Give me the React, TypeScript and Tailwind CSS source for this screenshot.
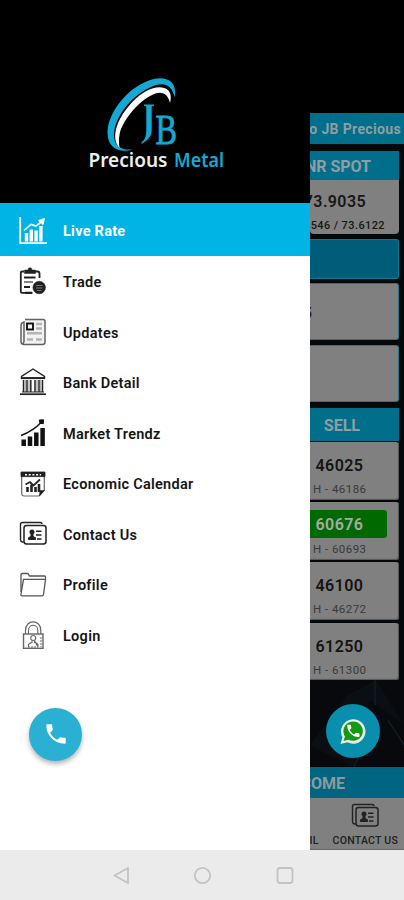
import React from "react";

type IconProps = { children: React.ReactNode; className?: string };

function Icon({ children, className = "" }: IconProps) {
  return (
    <svg viewBox="0 0 28 28" className={`h-7 w-7 shrink-0 ${className}`} fill="none" stroke="currentColor">
      {children}
    </svg>
  );
}

const LiveRateIcon = () => (
  <Icon>
    <path d="M1.2 0V26.2H28" strokeWidth="1.8" />
    <path d="M7.5 24.5V16M12.3 24.5V12.5M17.1 24.5V13.5M21.9 24.5V9" strokeWidth="3.4" />
    <path d="M5 13.5L12 7.500L17 9L23.5 4" strokeWidth="1.6" />
    <path d="M19.5 3.5L25.5 1.5L24 7.5Z" fill="currentColor" strokeWidth="1" />
  </Icon>
);

const TradeIcon = () => (
  <Icon className="text-[#202020]">
    <path d="M5 4.500H3Q1.8 4.500 1.8 6V24.5Q1.8 25.8 3 25.8H13.5" strokeWidth="1.8" />
    <path d="M16 4.500H18.5Q20.5 4.500 20.5 6.500V11" strokeWidth="1.8" />
    <path d="M5.500 3H9Q9 .700 11 .700Q13 .700 13 3H16.500V6.500H5.500Z" fill="currentColor" strokeWidth=".5" />
    <path d="M5 10.5H16.5M5 20H11M6 25.8H13" strokeWidth="2.200" />
    <path d="M5 15H14" strokeWidth="1.8" stroke="#777" />
    <circle cx="20.2" cy="20.5" r="6.3" fill="currentColor" strokeWidth=".5" />
    <path d="M17 18.5H23.5M17 21H23.5M18 23.5H22.5" stroke="#777" strokeWidth="1" />
  </Icon>
);

const NewsIcon = () => (
  <Icon className="text-[#626262]">
    <path d="M6 1.5H24Q26 1.5 26 3.5V24Q26 26.5 23.5 26.5H5Q2 26.5 2 23.5V7Q2 5 5 4V23Q5 25 3.5 26" strokeWidth="1.5" fill="#f2f2f2" />
    <rect x="8" y="5.5" width="6" height="6" stroke="#111" strokeWidth="1.9" />
    <path d="M17 6H23M17 10.5H23M8 15.3H23M8 21.5H14M17 21.5H23" stroke="#b4b4b4" strokeWidth="2.5" />
  </Icon>
);

const BankIcon = () => (
  <Icon className="text-[#222]">
    <path d="M2.5 10V8.5L14 1L25.5 8.5V10Z" strokeWidth="1.4" />
    <path d="M2 10.2H26" strokeWidth="1.8" />
    <path d="M4.5 12V24M8 12V24M11.8 12V24M16 12V24M20 12V24M23.5 12V24" strokeWidth="1.5" />
    <path d="M6.2 12V24M21.8 12V24M10 12V24M18 12V24" stroke="#999" strokeWidth="1.1" />
    <path d="M3 24H25" strokeWidth="1" />
    <path d="M1 26.2H27" strokeWidth="1.7" />
  </Icon>
);

const TrendIcon = () => (
  <Icon className="text-[#111]">
    <path d="M4.7 27V20.5M11 27V17.5M17.3 27V13.5M23.6 27V9" strokeWidth="4.5" />
    <path d="M2 16.5C10 13.5 17 9 22.500 3" strokeWidth="1.4" />
    <path d="M20.3 1L24.5 .8L24.3 4.8L21 4.200Z" fill="currentColor" strokeWidth="1" />
  </Icon>
);

const CalendarIcon = () => (
  <Icon className="text-[#222]">
    <path d="M2.7 3H25.3V20L20 26H5.2Q2.7 26 2.7 23.5Z" strokeWidth="1.2" stroke="#666" />
    <path d="M2 2H26V6.6H2Z" fill="currentColor" strokeWidth=".8" />
    <path d="M6 4.7H22" stroke="white" strokeWidth="1.5" strokeDasharray="2 1.7" />
    <path d="M21 20.5H25.5L20.5 26Z" fill="currentColor" strokeWidth=".5" />
    <path d="M8.5 22V17M12.5 22V14.5M16.5 22V17M20 22V14" strokeWidth="2.6" />
    <path d="M6.5 14.5L11 12L14.5 15.500L21 9.5" strokeWidth="1.8" />
  </Icon>
);

const ContactIcon = ({ className = "text-[#222]" }: { className?: string }) => (
  <Icon className={className}>
    <path d="M4.5 22H3.5Q1.5 21.5 1.5 19.5V4.5Q1.5 2.5 3.5 2.5H21Q23 2.5 23 4" strokeWidth="1.4" />
    <rect x="5" y="5.6" width="22" height="18.500" rx="2.5" strokeWidth="1.5" />
    <circle cx="13" cy="12" r="2.3" fill="currentColor" strokeWidth=".5" />
    <path d="M9.5 19.5V17.7L12 16.5V14H14V16.5L16.5 17.7V19.5Z" fill="currentColor" strokeWidth="1" />
    <path d="M17 11.2H22.5M17 15H22.5M18 19H22.5" strokeWidth="1.5" />
  </Icon>
);

const FolderIcon = () => (
  <Icon className="text-[#555]">
    <path d="M2 21V3.5Q2 2.500 3 2.500H9L10.500 5H25.5Q26.5 5 26.5 6.500V9" strokeWidth="1.3" />
    <path d="M4.500 8.3H25Q26.5 8.300 26.3 10L24.5 23.5Q24.3 24.8 23 24.8H3Q1.7 24.8 2 23Z" strokeWidth="1.3" />
  </Icon>
);

const LockIcon = () => (
  <Icon className="text-[#666]">
    <path d="M6.5 13V9.5C6.5-2 21.8-2 21.8 9.5V13" strokeWidth="1.2" />
    <path d="M9.5 13V9.5C9.5 2.5 18.8 2.5 18.8 9.5V13" strokeWidth="1.1" />
    <rect x="4.5" y="13" width="19.5" height="14.3" strokeWidth="1.4" />
    <circle cx="14.2" cy="17" r="2.5" strokeWidth="1.1" />
    <path d="M9.5 26V24Q9.5 22.500 13 21.500V19.500M15.500 19.500V21.500Q19 22.500 19 24V26Z" strokeWidth="1.1" />
    <path d="M9 26H19M22 16V26" strokeWidth="1" strokeDasharray="2 1" />
  </Icon>
);

const PHONE =
  "M6.62 10.79c1.44 2.83 3.76 5.14 6.59 6.59l2.2-2.2c.27-.27.67-.36 1.02-.24 1.12.37 2.33.57 3.57.57.55 0 1 .45 1 1V20c0 .55-.45 1-1 1-9.39 0-17-7.61-17-17 0-.55.45-1 1-1h3.5c.55 0 1 .45 1 1 0 1.25.2 2.45.57 3.57.11.35.03.74-.25 1.02l-2.2 2.2z";

const menu = [
  { label: "Trade", icon: <TradeIcon /> },
  { label: "Updates", icon: <NewsIcon /> },
  { label: "Bank Detail", icon: <BankIcon /> },
  { label: "Market Trendz", icon: <TrendIcon /> },
  { label: "Economic Calendar", icon: <CalendarIcon /> },
  { label: "Contact Us", icon: <ContactIcon /> },
  { label: "Profile", icon: <FolderIcon /> },
  { label: "Login", icon: <LockIcon /> },
];

const rates = [
  { sell: "46025", high: "46186", active: false },
  { sell: "60676", high: "60693", active: true },
  { sell: "46100", high: "46272", active: false },
  { sell: "61250", high: "61300", active: false },
];

function Logo() {
  return (
    <svg viewBox="0 0 150 100" className="mt-[75px] ml-[80px] h-[100px] w-[150px]">
      <path d="M53 75C38 79 28 73 27.500 59C27 40 46 14 69 6C86 0 98 7 94.500 23C92 9 82 7 70 13C50 22 35 43 34 59C33.500 71 40 76 53 75Z" transform="translate(0 -.500)" fill="#12aad4" />
      <path d="M39.500 72.500C32 66 34 49 48 32C62 14 80 8 88 15C91 18 91.500 23 90 28C88 19 82 15 72 20C57 27 41 48 39.500 60C38.500 65 39 69 39.500 72.500Z" fill="#fff" />
      <g fill="#12aad4" fontFamily="Liberation Serif, serif">
        <path d="M64 29.500H74V30.800L71.700 31.500V55C71.700 61 68 65 61.500 69V67.500C65 64.500 66.300 61.500 66.300 55V31.500L64 30.800Z" />
        <text x="75.500" y="68.500" fontSize="42" textLength="21.500" lengthAdjust="spacingAndGlyphs" stroke="#12aad4" strokeWidth=".8">B</text>
      </g>
      <g fontFamily="Noto Sans, sans-serif" fontWeight="600" fontSize="19.500">
        <text x="8.500" y="91.500" fill="#eee" textLength="79" lengthAdjust="spacingAndGlyphs">Precious</text>
        <text x="94" y="91.500" fill="#12aad4" textLength="50" lengthAdjust="spacingAndGlyphs">Metal</text>
      </g>
    </svg>
  );
}

function Drawer() {
  return (
    <aside className="flex w-[310px] shrink-0 flex-col bg-white">
      <header className="h-[203px] bg-black"><Logo /></header>
      <div className="flex h-[52.500px] items-center gap-[16px] bg-[#00b4e5] pt-[3px] pl-[19px] text-white">
        <LiveRateIcon />
        <span className="pt-[2px] text-[14.5px] font-bold tracking-[0.25px]">Live Rate</span>
      </div>
      <nav className="flex flex-col pt-[0.500px]">
        {menu.map((item) => (
          <div key={item.label} className="flex h-[50.6px] items-center gap-[16px] pl-[19px] text-[#151515]">
            {item.icon}
            <span className="pt-[3px] text-[14.5px] font-semibold tracking-[0.28px]">{item.label}</span>
          </div>
        ))}
      </nav>
      <button className="mt-[47px] ml-[29px] flex h-[53px] w-[53px] items-center justify-center rounded-full bg-[#29b0d2] shadow-[0_3px_5px_rgba(0,0,0,0.3)]">
        <svg viewBox="0 0 24 24" className="h-[26px] w-[26px]" fill="white"><path d={PHONE} /></svg>
      </button>
    </aside>
  );
}

function Backdrop() {
  return (
    <main className="flex w-[94px] flex-col overflow-hidden bg-[#05090c] whitespace-nowrap">
      <div className="h-[113px] shrink-0 bg-black" />
      <div className="flex h-[31px] shrink-0 items-center justify-end bg-[#006f8c] pr-[3px] pt-[2px] text-[14px] font-bold tracking-[0.35px] text-[#939ca0]">
        Welcome to JB Precious
      </div>
      <div className="mt-[7px] mr-[5px] flex h-[29px] shrink-0 items-center justify-end bg-[#006f8c] pt-[2px] pr-[28px] text-[16px] font-bold text-[#939ca0]">
        INR SPOT
      </div>
      <div className="mr-[5px] flex h-[54px] shrink-0 flex-col items-end rounded-b-sm bg-[#808080] text-[#171717]">
        <span className="mt-[11px] mr-[33px] text-[16px] leading-[22px] font-semibold tracking-[0.4px]">73.9035</span>
        <span className="mt-[4px] mr-[14px] text-[11px] leading-[18px] font-medium tracking-[0.4px]">73.4546 / 73.6122</span>
      </div>
      <div className="mt-[5px] mr-[5px] h-[40px] shrink-0 rounded-r-[3px] border-t border-r border-b border-[#087c96] bg-[#005d79]" />
      <div className="mt-[4px] mr-[5px] flex h-[57px] shrink-0 items-center overflow-hidden rounded-r-[3px] border-t border-r border-b border-[#267687] bg-[#808080] pt-[3px] text-[15px] font-medium text-[#222]">
        <span className="-ml-[6.500px]">5</span>
      </div>
      <div className="mt-[5px] mr-[5px] h-[57px] shrink-0 rounded-r-[3px] border-t border-r border-b border-[#267687] bg-[#808080]" />
      <div className="mt-[6px] mr-[5px] flex h-[33px] shrink-0 items-center justify-end bg-[#006f8c] pr-[39px] pt-[2px] text-[16px] font-bold text-[#939ca0]">
        SELL
      </div>
      <div className="mt-px mr-[5px] flex shrink-0 flex-col gap-[2.6px]">
        {rates.map((rate) => (
          <div key={rate.sell} className="h-[57.6px] rounded-r-[3px] bg-[#808080] pt-[9px] shadow-[inset_-1px_-1px_1px_#555]">
            <div className={`flex h-[28px] items-center pt-[2px] pl-[5.5px] text-[16px] font-semibold tracking-[0.45px] ${rate.active ? "mr-[12px] -mt-[1px] mb-px rounded-r-[3px] bg-[#006a00] text-[#aaa]" : "text-[#131313]"}`}>
              {rate.sell}
            </div>
            <div className="pl-[3px] text-[11.500px] leading-[20px] tracking-[0.45px] text-[#393939]">H - {rate.high}</div>
          </div>
        ))}
      </div>
      <section className="relative flex min-h-0 flex-1 items-start pt-[24px]">
        <svg viewBox="0 0 94 86" preserveAspectRatio="none" className="absolute inset-0 h-full w-full" aria-hidden="true">
          <path d="M0 0H94V86H0Z" fill="#07090c" />
          <path d="M66 0L94 44L60 20L44 86L0 65L38 15Z" fill="#0b0e12" />
          <path d="M65 0V25M78 40L94 64M44 86L50 73" stroke="#172432" fill="none" />
        </svg>
        <button className="relative ml-[16px] flex h-[54px] w-[54px] items-center justify-center rounded-full bg-[#078fad]">
          <svg viewBox="0 0 28 28" className="h-[28px] w-[28px]">
            <path d="M1.500 27L3.500 20.200A12.200 12.200 0 1 1 8.500 25.200Z" fill="#e8eeea" />
            <path d="M4.500 24L6 19.500A9.700 9.700 0 1 1 9.500 22.700Z" fill="#129a12" />
            <path transform="translate(6.2 5.7) scale(.68)" d={PHONE} fill="#fff" />
          </svg>
        </button>
      </section>
      <div className="flex h-[31px] shrink-0 items-center justify-end bg-[#006580] pr-[59px] pt-[2px] text-[16px] font-bold text-[#8d999e]">
        WELCOME
      </div>
      <footer className="flex h-[52px] shrink-0 justify-end gap-[14px] border-b border-[#666] bg-[#808080] pr-[6px] text-[10.500px] font-medium tracking-[0.25px] text-[#202020]">
        <span className="flex items-end">BANK DETAIL</span>
        <div className="flex flex-col items-center justify-between pt-[4px]">
          <ContactIcon className="text-[#222]" />
          <span>CONTACT US</span>
        </div>
      </footer>
    </main>
  );
}

export default function App() {
  return (
    <div className="flex h-[900px] w-[404px] flex-col overflow-hidden bg-white font-[Roboto,sans-serif]">
      <div className="flex h-[850px]">
        <Drawer />
        <Backdrop />
      </div>
      <nav className="h-[50px] bg-[#ebebeb]">
        <svg viewBox="0 0 404 50" className="h-[50px] w-[404px]" fill="none" stroke="#c3c3c3" strokeWidth="1.800">
          <path d="M114.500 25.500L128 18V33Z" strokeLinejoin="round" />
          <circle cx="202.500" cy="25.500" r="7.700" />
          <rect x="277.500" y="18" width="15" height="15" rx="2.500" />
        </svg>
      </nav>
    </div>
  );
}
